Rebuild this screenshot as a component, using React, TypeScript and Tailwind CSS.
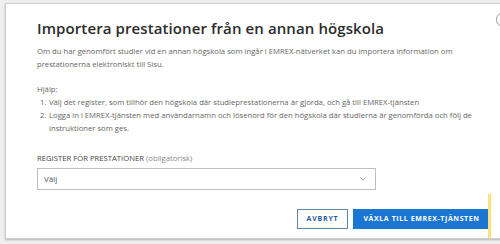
import React from "react";

export default function App() {
  const font = { fontFamily: '"Open Sans", "Noto Sans", sans-serif' };
  return (
    <div className="relative w-[500px] h-[244px] overflow-hidden bg-[#efefef] pl-[5px] pt-[3px]" style={font}>
      <div className="w-[530px] h-[236px] bg-white border border-[#cfcfcf] shadow-[0_1px_2px_rgba(0,0,0,0.25)]">
        <div className="pl-[31px] pt-[13px] w-[484px]">
          <h1 className="text-[15px] leading-[22px] font-semibold text-[#2b2b2b] whitespace-nowrap tracking-[0.1px]">
            Importera prestationer från en annan högskola
          </h1>
          <div className="mt-[6px] text-[7.7px] leading-[13px] text-[#666]">
            <p className="whitespace-nowrap">
              Om du har genomfört studier vid en annan högskola som ingår i EMREX-nätverket kan du importera information om
            </p>
            <p className="whitespace-nowrap">prestationerna elektroniskt till Sisu.</p>
            <p className="mt-[12px]">Hjälp:</p>
            <ol className="mt-[0px]">
              <li className="flex">
                <span className="w-[12px] shrink-0 pl-[3px]">1.</span>
                <span className="whitespace-nowrap">
                  Välj det register, som tillhör den högskola där studieprestationerna är gjorda, och gå till EMREX-tjänsten
                </span>
              </li>
              <li className="flex">
                <span className="w-[12px] shrink-0 pl-[3px]">2.</span>
                <span>
                  <span className="block whitespace-nowrap">
                    Logga in i EMREX-tjänsten med användarnamn och lösenord för den högskola där studierna är genomförda och följ de
                  </span>
                  <span className="block whitespace-nowrap">instruktioner som ges.</span>
                </span>
              </li>
            </ol>
          </div>
          <div className="mt-[17px] text-[7.7px] leading-[12px] whitespace-nowrap">
            <span className="text-[#444] font-medium">REGISTER FÖR PRESTATIONER</span>{" "}
            <span className="text-[#888]">(obligatorisk)</span>
          </div>
          <div className="mt-[4px] w-[339px] h-[22px] border border-[#bdbdbd] flex items-center justify-between pl-[6px] pr-[9px]">
            <span className="text-[8px] text-[#555]">Välj</span>
            <svg width="6" height="4" viewBox="0 0 6 4" fill="none">
              <path d="M0.4 0.4 L3 3.2 L5.6 0.4" stroke="#8a8a8a" strokeWidth="0.8" />
            </svg>
          </div>
          <div className="mt-[19px] flex justify-end gap-[5px]">
            <button className="h-[20px] w-[51px] border border-[#5d85a8] bg-white text-[#1f5d9c] text-[7px] font-bold tracking-[0.8px] flex items-center justify-center">
              AVBRYT
            </button>
            <button className="h-[20px] w-[137px] bg-[#1b75d3] text-white text-[7px] font-bold tracking-[0.6px] flex items-center justify-center whitespace-nowrap">
              VÄXLA TILL EMREX-TJÄNSTEN
            </button>
          </div>
        </div>
      </div>
      <div className="absolute left-[496px] top-[12px] w-[15px] h-[15px] rounded-full border border-[#9a9a9a] bg-white" />
      <div className="absolute left-[488px] top-[194px] w-[3px] h-[44px] bg-[#fbe27d]" />
    </div>
  );
}
